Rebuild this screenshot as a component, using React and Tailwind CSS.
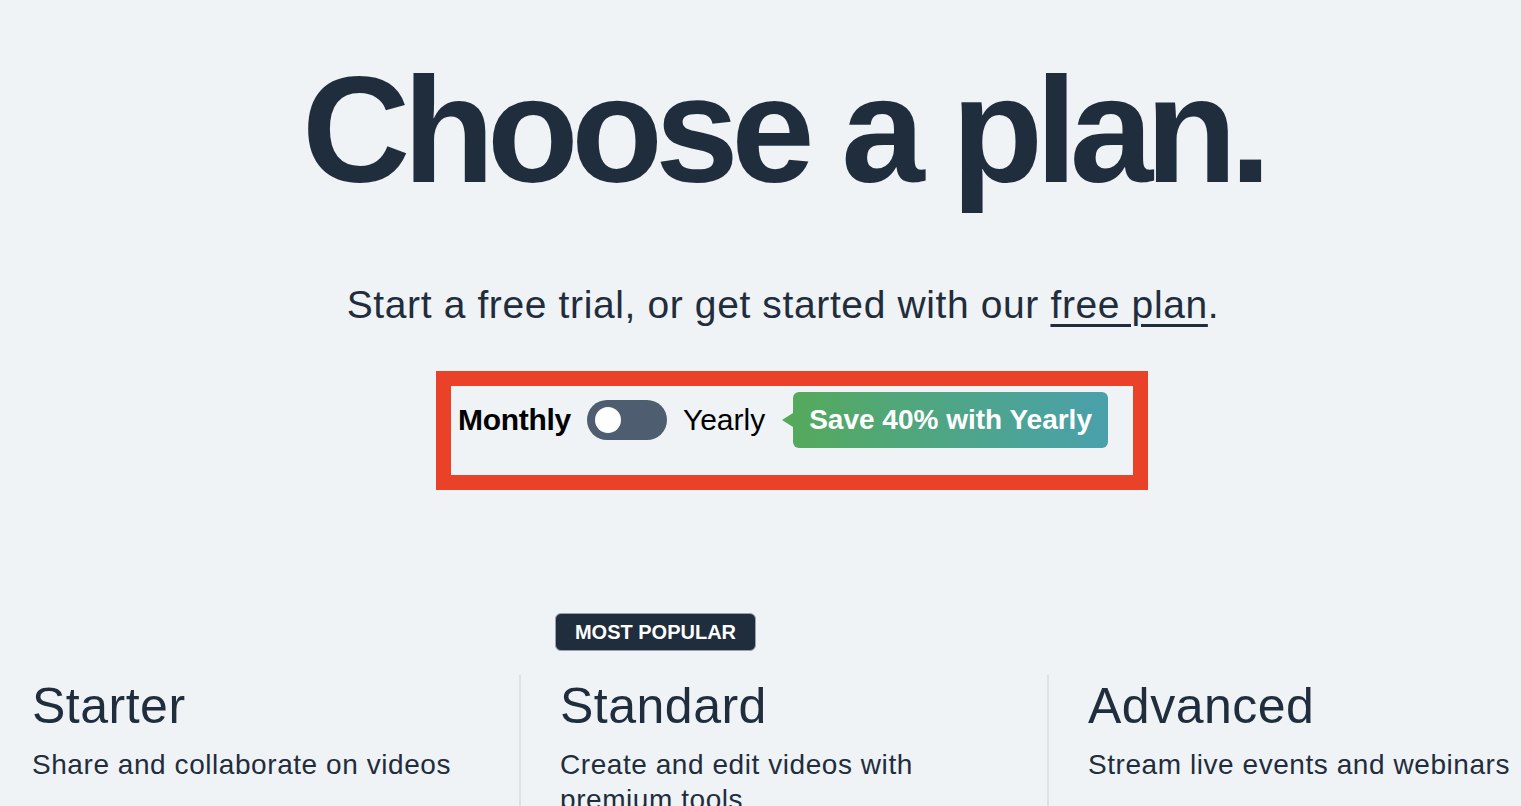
export default function App() {
  const plans = [
    { name: "Starter", desc: "Share and collaborate on videos" },
    { name: "Standard", desc: "Create and edit videos with premium tools" },
    { name: "Advanced", desc: "Stream live events and webinars" },
  ];
  return (
    <div
      className="w-full h-screen overflow-hidden bg-[#eff3f6] text-[#1f2d3d]"
      style={{ fontFamily: '"Liberation Sans", Arial, Helvetica, sans-serif' }}
    >
      <div className="w-[1584px] ml-[-9px] flex flex-col items-center pt-[55px]">
        <h1 className="text-[150px] leading-none font-bold tracking-[-0.05em] text-[#1f2d3d]">
          Choose a plan.
        </h1>
        <p className="mt-[80px] text-[39px] leading-none tracking-[0.016em] text-[#1f2d3d]">
          Start a free trial, or get started with our{" "}
          <a href="#" className="underline decoration-[3px] underline-offset-[6px]">
            free plan
          </a>
          .
        </p>

        <div className="relative mt-[68px] flex items-center gap-4">
          <span className="text-[30px] leading-none font-bold text-black tracking-[-0.01em]">Monthly</span>
          <div className="w-[80px] h-[40px] rounded-full bg-[#4e5d6f] flex items-center pl-[8px]">
            <div className="w-[26px] h-[26px] rounded-full bg-white" />
          </div>
          <span className="text-[30px] leading-none text-black">Yearly</span>
          <div className="relative ml-[12px] flex items-center h-[56px] pl-4 pr-4 rounded-md bg-linear-to-r from-[#55a95b] to-[#4aa0ab] text-white font-bold text-[28px] leading-none">
            <span className="absolute left-[-11px] top-1/2 -translate-y-1/2 w-0 h-0 border-y-[7px] border-y-transparent border-r-[11px] border-r-[#55a95b]" />
            Save 40% with Yearly
          </div>
          <div className="pointer-events-none absolute left-[-22px] top-[-21px] w-[712px] h-[119px] border-[15px] border-[#ea4228]" />
        </div>

        <div className="w-full grid grid-cols-3 mt-[165px]">
          <div />
          <div className="pl-[36px]">
            <span className="inline-flex h-[38px] w-[201px] items-center justify-center rounded-md border-[1.5px] border-[#98a2ad] bg-[#1f2d3d] text-white text-[20px] font-bold leading-none">
              MOST POPULAR
            </span>
          </div>
          <div />
        </div>

        <div className="w-full grid grid-cols-3 mt-[24px]">
          {plans.map((p) => (
            <div key={p.name} className="border-l-2 border-[#dde2e7] pl-[39px] pr-[39px] pt-[6px] h-[200px]">
              <h2 className="text-[50px] leading-none font-normal tracking-[0.01em] text-[#1f2d3d]">{p.name}</h2>
              <p className="mt-[16px] text-[28px] leading-[35px] tracking-[0.02em] text-[#1f2d3d]">{p.desc}</p>
            </div>
          ))}
        </div>
      </div>
    </div>
  );
}
